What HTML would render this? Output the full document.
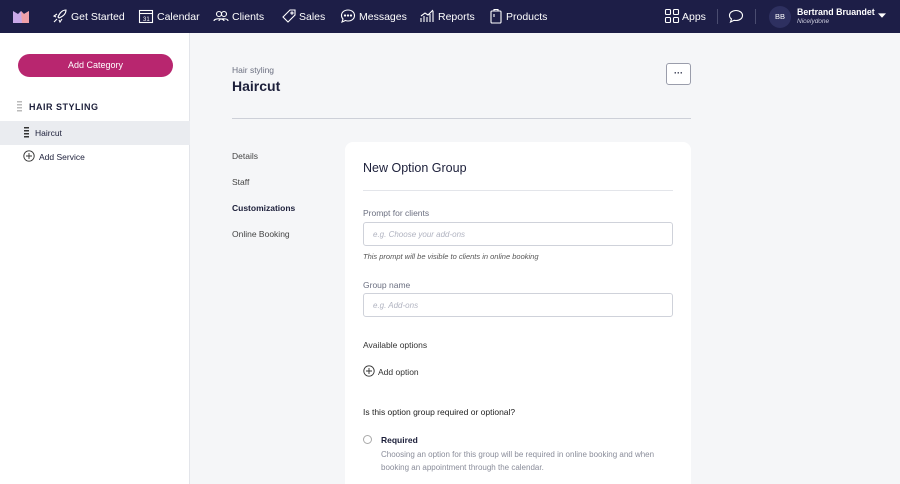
<!DOCTYPE html>
<html style="width:900px;height:484px;overflow:hidden"><head><style>
*{box-sizing:border-box;margin:0;padding:0}
body{width:900px;height:484px;overflow:hidden;font-family:"Liberation Sans",sans-serif;background:#f5f6f8;position:relative;color:#1c1f3a}
.nav{position:absolute;left:0;top:0;width:900px;height:33px;background:#1d1e47;color:#fff;font-size:10.5px}
.nav span{position:absolute;top:11px}
.ic{position:absolute;top:8px;width:16px;height:16px}
.side{position:absolute;left:0;top:33px;width:190px;height:451px;background:#fff;border-right:1px solid #e3e5ea}
.btn{position:absolute;left:18px;top:21px;width:155px;height:23px;border-radius:12px;background:#b8266f;color:#fff;font-size:9px;text-align:center;line-height:23px}
.abs{position:absolute}
.card{position:absolute;left:345px;top:142px;width:346px;height:342px;background:#fff;border-radius:8px 8px 0 0}
.input{position:absolute;left:18px;width:310px;height:24px;border:1px solid #cfd2da;border-radius:3px;font-size:8px;color:#b0b3c0;font-style:italic;padding:7px 9px}
.lbl{position:absolute;left:18px;font-size:8.5px;color:#6b6f80}
</style></head><body>
<div class="nav">
<svg class="ic" style="left:12px;width:18px" viewBox="0 0 18 16"><path d="M1 3 L6 6 L9 3 L12 6 L17 3 L17 15 L1 15Z" fill="#c9a8e8"/><path d="M9 3 L12 6 L17 3 L17 15 L10 15Z" fill="#f0a0a8"/></svg>
<svg class="ic" style="left:52px" viewBox="0 0 16 16" fill="none" stroke="#fff" stroke-width="1.1"><path d="M5 11 L2 14 M6 9 C8 4 11 2 14 2 C14 5 12 8 7 10Z M4 9 L2 8 L5 6 M7 12 L8 14 L10 11"/></svg><span style="left:71px">Get Started</span>
<svg class="ic" style="left:138px" viewBox="0 0 16 16" fill="none" stroke="#fff" stroke-width="1.1"><rect x="1.5" y="2.5" width="13" height="12"/><path d="M1.5 5.5H14.5"/><text x="5" y="13" font-size="6" fill="#fff" stroke="none">31</text></svg><span style="left:157px">Calendar</span>
<svg class="ic" style="left:213px" viewBox="0 0 16 16" fill="none" stroke="#fff" stroke-width="1.1"><circle cx="6" cy="6" r="2.5"/><circle cx="11" cy="6" r="2.5"/><path d="M1 13C1 10 11 10 11 13M6 13C6 10 15 10 15 13"/></svg><span style="left:232px">Clients</span>
<svg class="ic" style="left:281px" viewBox="0 0 16 16" fill="none" stroke="#fff" stroke-width="1.1"><path d="M2 9 L9 2 L14 2 L14 7 L7 14Z"/><circle cx="11" cy="5" r="1"/></svg><span style="left:299px">Sales</span>
<svg class="ic" style="left:340px" viewBox="0 0 16 16" fill="none" stroke="#fff" stroke-width="1.1"><path d="M8 2C4 2 1.5 4.5 1.5 7.5C1.5 9 2 10 3 11L2 14L5.5 12.5C6.3 12.8 7 13 8 13C12 13 14.5 10.5 14.5 7.5C14.5 4.5 12 2 8 2Z"/><circle cx="5" cy="7.5" r=".6" fill="#fff"/><circle cx="8" cy="7.5" r=".6" fill="#fff"/><circle cx="11" cy="7.5" r=".6" fill="#fff"/></svg><span style="left:359px">Messages</span>
<svg class="ic" style="left:419px" viewBox="0 0 16 16" fill="none" stroke="#fff" stroke-width="1.1"><path d="M2 14V10M5 14V8M8 14V9M11 14V6M14 14V3M2 8L6 5L9 7L14 2"/></svg><span style="left:438px">Reports</span>
<svg class="ic" style="left:488px" viewBox="0 0 16 16" fill="none" stroke="#fff" stroke-width="1.1"><rect x="3" y="3" width="10" height="12" rx="1"/><path d="M6 3V1.5H10V3M6 6V9"/></svg><span style="left:506px">Products</span>
<svg class="ic" style="left:664px" viewBox="0 0 16 16" fill="none" stroke="#fff" stroke-width="1.1"><rect x="1.5" y="1.5" width="5" height="5" rx="1"/><rect x="9.5" y="1.5" width="5" height="5" rx="1"/><rect x="1.5" y="9.5" width="5" height="5" rx="1"/><rect x="9.5" y="9.5" width="5" height="5" rx="1"/></svg><span style="left:682px">Apps</span>
<div class="abs" style="left:717px;top:9px;width:1px;height:15px;background:#4a4c70"></div>
<svg class="ic" style="left:728px" viewBox="0 0 16 16" fill="none" stroke="#fff" stroke-width="1.1"><path d="M8 2.5C4.5 2.5 1.5 4.5 1.5 7.5C1.5 9 2.3 10.2 3.5 11L2.5 14L6 12.3C6.6 12.4 7.3 12.5 8 12.5C11.5 12.5 14.5 10.5 14.5 7.5C14.5 4.5 11.5 2.5 8 2.5Z"/></svg>
<div class="abs" style="left:755px;top:9px;width:1px;height:15px;background:#4a4c70"></div>
<div class="abs" style="left:769px;top:6px;width:22px;height:22px;border-radius:50%;background:#2e3060;font-size:7.5px;text-align:center;line-height:22px">BB</div>
<span style="left:797px;top:7px;font-weight:bold;font-size:8.8px">Bertrand Bruandet</span>
<span style="left:797px;top:18px;font-size:6.5px;font-style:italic;color:#ccd">Nicelydone</span>
<svg class="abs" style="left:878px;top:13px" width="8" height="6" viewBox="0 0 9 6"><path d="M0 0H9L4.5 5Z" fill="#fff"/></svg>
</div>
<div class="side">
<div class="btn">Add Category</div>
<div class="abs" style="left:17px;top:68px;width:5px;height:11px;background:repeating-linear-gradient(#bbb 0 1.5px,transparent 1.5px 3px);"></div>
<div class="abs" style="left:29px;top:69px;font-size:9px;font-weight:bold;letter-spacing:.5px">HAIR STYLING</div>
<div class="abs" style="left:0;top:88px;width:190px;height:24px;background:#eaecf0"></div>
<div class="abs" style="left:24px;top:94px;width:5px;height:11px;background:repeating-linear-gradient(#333 0 1.5px,transparent 1.5px 3px);"></div>
<div class="abs" style="left:35px;top:95px;font-size:8.5px">Haircut</div>
<svg class="abs" style="left:23px;top:117px" width="12" height="12" viewBox="0 0 12 12" fill="none" stroke="#333" stroke-width=".9"><circle cx="6" cy="6" r="5.2"/><path d="M6 3V9M3 6H9"/></svg>
<div class="abs" style="left:39px;top:119px;font-size:8.5px">Add Service</div>
</div>
<div class="abs" style="left:232px;top:65px;font-size:8.5px;color:#6b6f80">Hair styling</div>
<div class="abs" style="left:232px;top:78px;font-size:14px;font-weight:bold">Haircut</div>
<div class="abs" style="left:666px;top:63px;width:25px;height:22px;border:1px solid #9a9dab;border-radius:3px;background:#fff;text-align:center;font-size:9px;line-height:18px;font-weight:bold">···</div>
<div class="abs" style="left:232px;top:118px;width:459px;height:1px;background:#cdd0d8"></div>
<div class="abs" style="left:232px;top:151px;font-size:8.5px;color:#444">Details</div>
<div class="abs" style="left:232px;top:177px;font-size:8.5px;color:#444">Staff</div>
<div class="abs" style="left:232px;top:203px;font-size:8.5px;font-weight:bold">Customizations</div>
<div class="abs" style="left:232px;top:229px;font-size:8.5px;color:#444">Online Booking</div>
<div class="card">
<div class="abs" style="left:18px;top:19px;font-size:12.5px">New Option Group</div>
<div class="abs" style="left:18px;top:48px;width:310px;height:1px;background:#e3e5ea"></div>
<div class="lbl" style="top:66px">Prompt for clients</div>
<div class="input" style="top:80px">e.g. Choose your add-ons</div>
<div class="abs" style="left:18px;top:110px;font-size:7.5px;font-style:italic;color:#555">This prompt will be visible to clients in online booking</div>
<div class="lbl" style="top:138px">Group name</div>
<div class="input" style="top:151px">e.g. Add-ons</div>
<div class="abs" style="left:18px;top:198px;font-size:8.5px;color:#333">Available options</div>
<svg class="abs" style="left:18px;top:223px" width="12" height="12" viewBox="0 0 12 12" fill="none" stroke="#333" stroke-width=".9"><circle cx="6" cy="6" r="5.2"/><path d="M6 3V9M3 6H9"/></svg>
<div class="abs" style="left:33px;top:225px;font-size:8.5px;color:#333">Add option</div>
<div class="abs" style="left:18px;top:265px;font-size:8.5px;color:#222">Is this option group required or optional?</div>
<div class="abs" style="left:18px;top:293px;width:9px;height:9px;border:1px solid #aaa;border-radius:50%"></div>
<div class="abs" style="left:36px;top:293px;font-size:8.5px;font-weight:bold">Required</div>
<div class="abs" style="left:36px;top:306px;width:300px;font-size:8px;line-height:13px;color:#8a8d9a">Choosing an option for this group will be required in online booking and when booking an appointment through the calendar.</div>
</div>
</body></html>
